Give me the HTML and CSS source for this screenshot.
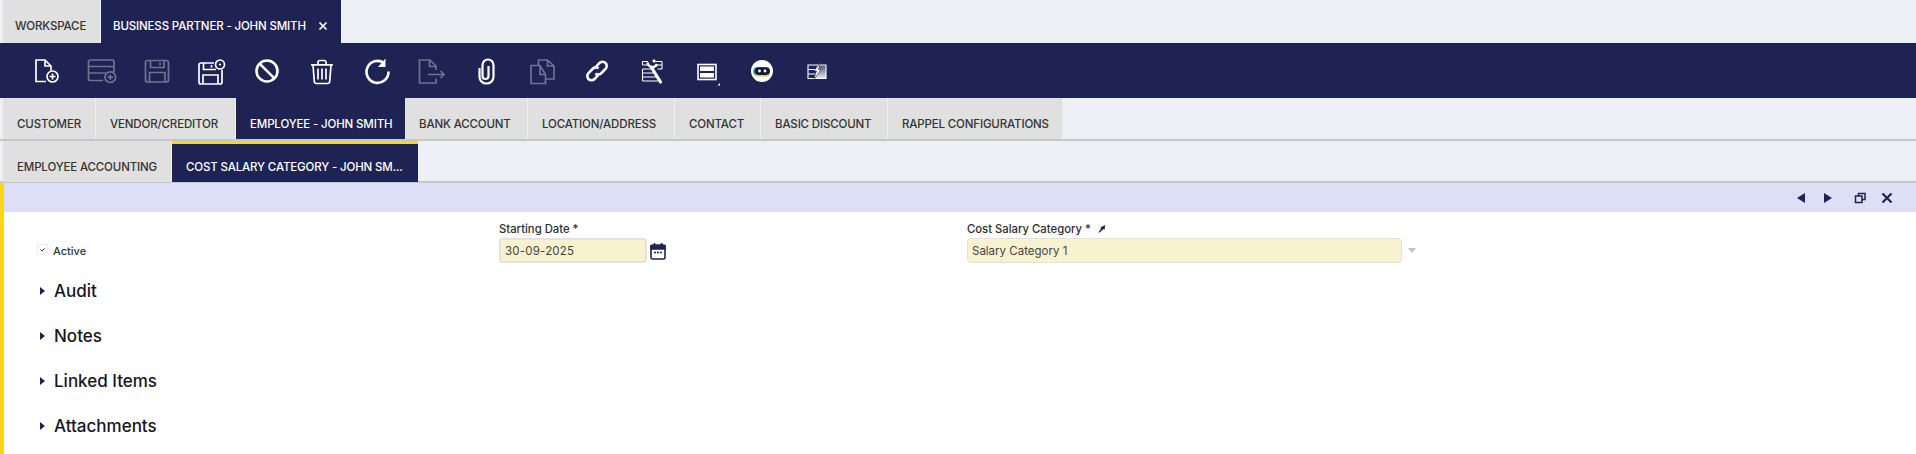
FILE: index.html
```html
<!DOCTYPE html>
<html lang="en">
<head>
<meta charset="utf-8">
<title>Business Partner - John Smith</title>
<link rel="stylesheet" href="styles.css">
</head>
<body>
<nav class="tabs tabs-top">
  <div class="tab">WORKSPACE</div>
  <div class="tab active">BUSINESS PARTNER - JOHN SMITH<svg class="tab-close" viewBox="0 0 10 10"><path d="M1.5 1.5l7 7M8.5 1.5l-7 7"/></svg></div>
</nav>
<div class="toolbar">
  <button class="tool"><svg viewBox="0 0 32 32"><path d="M15 26.5H5V5h9l6 6v4.500M14 5v6h6"/><circle cx="21.500" cy="21.500" r="5.500"/><path d="M21.500 18.500v6M18.500 21.500h6"/></svg></button>
  <button class="tool off"><svg viewBox="0 0 32 32"><path d="M17 25.500H4.500a2 2 0 0 1-2-2V7a2 2 0 0 1 2-2H26a2 2 0 0 1 2 2v10M2.500 11.500H28M2.500 18H20"/><circle cx="24.300" cy="22.200" r="5.300"/><path d="M24.300 19.400v5.600M21.500 22.200h5.600"/></svg></button>
  <button class="tool off"><svg viewBox="0 0 32 32"><path d="M6.500 5.500h19a2 2 0 0 1 2 2v17.500a2 2 0 0 1-2 2h-19a2 2 0 0 1-2-2V7.500a2 2 0 0 1 2-2z"/><path d="M9.500 5.500v7h13.500v-7M8.500 27V17.500h15.500V27M19 7.500v3"/></svg></button>
  <button class="tool"><svg viewBox="0 0 32 32"><path d="M18 8H5a2 2 0 0 0-2 2v17a2 2 0 0 0 2 2h19a2 2 0 0 0 2-2V15"/><path d="M7.500 8v6.500h12.500M7 29V20h15v9M15.500 10v2.500"/><circle cx="24" cy="9.500" r="4.500"/><circle class="dot" cx="24" cy="9.500" r="1.100"/></svg></button>
  <button class="tool"><svg viewBox="0 0 32 32"><circle class="bold" cx="16" cy="16" r="10.500"/><path class="bold" d="M8.800 8.800l14.400 14.400"/></svg></button>
  <button class="tool"><svg viewBox="0 0 32 32"><path d="M5 9.800h22M12 9.500V7.300c0-1 .8-1.800 1.800-1.800h4.400c1 0 1.800.8 1.800 1.800v2.200M7 10l1.300 16.500c.1 1.200 1 2 2.200 2h11c1.200 0 2.100-.8 2.200-2L25 10M12 13.500v11M16 13.500v11M20 13.500v11"/></svg></button>
  <button class="tool"><svg viewBox="0 0 32 32"><path class="bold" d="M23 8a11 11 0 1 0 4.500 8.500"/><path class="solid" d="M24.500 3.500v8.500h-7.500z"/></svg></button>
  <button class="tool off"><svg viewBox="0 0 32 32"><path d="M20 15v-4l-6-6H3.500v23H20v-4.500M13.500 5v6.500H20M12 19.500h16M24.500 16l3.500 3.500-3.500 3.500"/></svg></button>
  <button class="tool"><svg viewBox="0 0 32 32"><path class="clip" d="M8.500 13v9a7 6.500 0 0 0 14 0V10a5.500 5.500 0 0 0-11 0v11a3 3 0 0 0 6 0V11"/></svg></button>
  <button class="tool off"><svg viewBox="0 0 32 32"><path d="M14 10.500H5v18h14.500v-9zM14 10.500v9h5.500M12.500 10.500V5h9l6.500 6v13h-8.500M21.500 5v6h6.500"/></svg></button>
  <button class="tool"><svg viewBox="0 0 32 32"><path class="bold" d="M13.500 13.500l5-5.500a4.200 4.200 0 0 1 6 0c1.600 1.600 1.600 4.200 0 5.800l-4.500 4.700a4 4 0 0 1-5.500 0M18.500 18.500l-5 5.500a4.200 4.200 0 0 1-6 0c-1.600-1.600-1.600-4.200 0-5.800L12 13.500a4 4 0 0 1 5.500 0"/></svg></button>
  <button class="tool"><svg viewBox="0 0 32 32"><path class="thin" d="M6.500 6.500H12M6.500 10H13M18 6.500h8M21 10h5M6.500 14h10M21.500 14h4.500M6.500 18h12M6.500 22h14M6.500 26h16M6.500 14v12M6.500 6.500V10M26 6.500V14"/><path class="wrench" d="M15.500 12.500l9 14.500"/><path class="bold" d="M11.500 7.500c.5 3 3 5 6 4.500 1.500-.3 3-1.500 3.500-3"/><path class="bold" d="M17 7l2-2"/></svg></button>
  <button class="tool"><svg viewBox="0 0 32 32"><rect class="frame" x="7" y="9.500" width="18" height="15"/><path class="solid" d="M9 11.500h14v4.500H9zM9 18h14v4.500H9z"/><path class="solid" d="M29 28v2.500h-2.500z"/></svg></button>
  <button class="tool bot"><svg viewBox="0 0 32 32"><circle class="solid" cx="16" cy="16" r="11"/><rect class="bot-glow" x="7" y="12" width="16" height="9" rx="4.500"/><rect class="bot-amber" x="9" y="14" width="15" height="7.500" rx="3.700"/><rect class="bot-face" x="8.500" y="12.300" width="15.500" height="7.600" rx="3.800"/><circle class="solid" cx="13.500" cy="16" r="1.400"/><circle class="solid" cx="19" cy="16" r="1.400"/></svg></button>
  <button class="tool"><svg viewBox="0 0 32 32"><defs><linearGradient id="fade" x1="0" x2="0" y1="0" y2="1"><stop offset="0" stop-color="#fff" stop-opacity=".2"/><stop offset="1" stop-color="#fff" stop-opacity=".9"/></linearGradient></defs><rect class="grad" x="15" y="10" width="10" height="13.500"/><path class="thin" d="M7 10h18v13.500H7zM7 14.500h9M7 19h8"/><path class="bolt" d="M19.500 7.500l-2 7h2.500l-8 11.500 3.500-10h-2.500z"/></svg></button>
</div>
<nav class="tabs tabs-second">
  <div class="tab">CUSTOMER</div>
  <div class="tab">VENDOR/CREDITOR</div>
  <div class="tab active">EMPLOYEE - JOHN SMITH</div>
  <div class="tab">BANK ACCOUNT</div>
  <div class="tab">LOCATION/ADDRESS</div>
  <div class="tab">CONTACT</div>
  <div class="tab">BASIC DISCOUNT</div>
  <div class="tab">RAPPEL CONFIGURATIONS</div>
</nav>
<nav class="tabs tabs-third">
  <div class="tab">EMPLOYEE ACCOUNTING</div>
  <div class="tab active marked">COST SALARY CATEGORY - JOHN SM...</div>
</nav>
<main class="panel">
  <div class="panel-bar">
    <svg class="nav-btn prev" viewBox="0 0 26 26"><path d="M17 8v10l-8-5z"/></svg>
    <svg class="nav-btn next" viewBox="0 0 26 26"><path d="M9 8v10l8-5z"/></svg>
    <svg class="nav-btn line" viewBox="0 0 26 26"><path d="M7.500 11h6.500v6.500H7.500zM10.500 10.500V8.500H17V14.500h-2.500"/></svg>
    <svg class="nav-btn line heavy" viewBox="0 0 26 26"><path d="M8.500 8.500l9 9M17.500 8.500l-9 9"/></svg>
  </div>
  <form class="form">
    <label class="check-field">
      <span class="checkbox"><svg viewBox="0 0 10 10"><path d="M2.800 5l1.700 1.700 2.800-3"/></svg></span>
      <span class="check-label">Active</span>
    </label>
    <div class="field">
      <span class="field-label">Starting Date *</span>
      <div class="field-row">
        <div class="input date-input">30-09-2025</div>
        <svg class="calendar" viewBox="0 0 16 18"><path class="cal-fill" d="M1 4h14v3H1z"/><rect x="1" y="3" width="14" height="14" rx="1.500"/><path d="M4.500 1v3M11.500 1v3"/><path class="cal-dots" d="M4 10.500h2M7 10.500h2M10 10.500h2"/></svg>
      </div>
    </div>
    <div class="field">
      <span class="field-label">Cost Salary Category * <svg class="pin" viewBox="0 0 10 10"><path d="M1.500 9.500l3-4.500-.8-1L9 1 8.500 6.500 7.200 5.500 3 9.500z"/></svg></span>
      <div class="field-row">
        <div class="input select-input">Salary Category 1</div>
        <span class="caret"></span>
      </div>
    </div>
  </form>
  <section class="section"><span class="arrow"></span><h2>Audit</h2></section>
  <section class="section"><span class="arrow"></span><h2>Notes</h2></section>
  <section class="section"><span class="arrow"></span><h2>Linked Items</h2></section>
  <section class="section"><span class="arrow"></span><h2>Attachments</h2></section>
</main>
</body>
</html>
```
FILE: styles.css
```css
* { box-sizing: border-box; }
html, body { margin: 0; height: 454px; overflow: hidden; background: #fff; }
body { font-family: Inter, "Liberation Sans", sans-serif; color: #333; }

.tabs { display: grid; padding-left: 3px; background: #eff0f5; justify-content: start; }
.tabs-top { height: 43px; grid-template-columns: 98px 240px; }
.tabs-second { height: 43px; grid-template-columns: 93px 140px 169px 123px 147px 86px 127px 175px; border-bottom: 2px solid #c6c7cb; }
.tabs-third { height: 42px; grid-template-columns: 169px 246px; border-bottom: 2px solid #c6c7cb; }

.tab {
  display: flex; align-items: center;
  padding: 10px 0 0 14px;
  background: #e0e0e0;
  border-right: 1px solid #f0f0f2;
  font-size: 11.500px; font-weight: 500; letter-spacing: -.15px; white-space: nowrap;
  color: #333;
}
.tabs-top .tab { padding: 8px 0 0 12px; }
.tab.active { background: #1f2353; color: #fff; border-right: 0; }
.tab.marked { border-top: 3px solid #ffd612; padding: 7px 0 0 14px; }
.tabs-second .tab, .tabs-third .tab { height: 41px; }
.tab-close { width: 10px; height: 10px; margin-left: 12px; fill: none; stroke: #fff; stroke-width: 1.700; }

.toolbar { display: flex; height: 55px; padding-left: 19px; background: #1f2353; }
.tool { display: flex; align-items: center; justify-content: center; width: 55px; height: 55px; padding: 0; background: none; border: 0; }
.tool svg { width: 32px; height: 32px; overflow: visible; fill: none; stroke: #fff; stroke-width: 1.700; }
.tool.off svg { opacity: .36; }
.tool circle, .tool rect { fill: #1f2353; }
.tool .bold { stroke-width: 2.600; fill: none; }
.tool .clip { stroke-width: 2.200; }
.tool .thin { stroke-width: 1.100; }
.tool .wrench { stroke-width: 3.200; stroke-linecap: round; }
.tool .frame { fill: none; stroke-width: 1.600; }
.tool .solid { fill: #fff; stroke: none; }
.tool .dot { fill: #fff; stroke: none; }
.tool .bot-glow { fill: #27c8e8; stroke: none; }
.tool .bot-amber { fill: #e8c93a; stroke: none; }
.tool .bot-face { fill: #16193e; stroke: none; }
.tool .grad { fill: url(#fade); stroke: none; }
.tool .bolt { fill: #fff; stroke: #1f2353; stroke-width: .6; }

.panel { border-left: 4px solid #ffd612; height: 272px; }
.panel-bar { display: flex; justify-content: flex-end; align-items: center; height: 29px; padding-right: 16px; background: #dcdff5; }
.nav-btn { width: 26px; height: 26px; fill: #1f2353; }
.nav-btn.prev { margin-right: 1px; }
.nav-btn.next { margin-right: 7px; }
.nav-btn.line { fill: none; stroke: #1f2353; stroke-width: 1.500; }
.nav-btn.heavy { stroke-width: 2.200; }

.form { display: grid; grid-template-columns: 466px 468px 449px; height: 55px; padding: 10px 0 0 29px; }
.check-field { display: flex; align-items: center; gap: 5px; height: 45px; padding: 12px 0 0 4px; }
.checkbox { display: block; width: 11px; height: 11px; border: 1px solid #ececf2; background: #fff; margin-top: -2px; }
.checkbox svg { display: block; width: 9px; height: 9px; fill: none; stroke: #1f2353; stroke-width: 1.100; }
.check-label { font-size: 11px; font-weight: 500; color: #333; }
.field { display: flex; flex-direction: column; }
.field-label { display: block; height: 16px; font-size: 11.300px; font-weight: 500; line-height: 14px; color: #2e2e2e; }
.field-row { display: flex; align-items: center; }
.input { height: 25px; padding-left: 4px; background: #f9f2cf; border: 1px solid #e2e2e2; border-radius: 4px; font-size: 11.500px; line-height: 24px; color: #444; }
.date-input { width: 148px; border-width: 2px; letter-spacing: .2px; line-height: 22px; }
.select-input { width: 435px; }
.calendar { width: 16px; height: 18px; margin-left: 3px; fill: none; stroke: #1f2353; stroke-width: 1.600; }
.cal-fill { fill: #1f2353; }
.cal-dots { stroke-width: 1.300; }
.pin { display: inline-block; width: 9px; height: 9px; margin-left: 3px; fill: #1f2353; }
.caret { width: 0; height: 0; margin-left: 6px; border: 4.500px solid transparent; border-top: 5px solid #c3c4c8; border-bottom: 0; }

.section { display: flex; align-items: center; height: 45px; padding-left: 36px; }
.section:first-of-type { margin-top: 1px; }
.section h2 { margin: 0 0 0 9px; font-size: 17px; font-weight: 500; color: #16161f; }
.arrow { width: 0; height: 0; border-left: 5px solid #1f2353; border-top: 4px solid transparent; border-bottom: 4px solid transparent; }
```
